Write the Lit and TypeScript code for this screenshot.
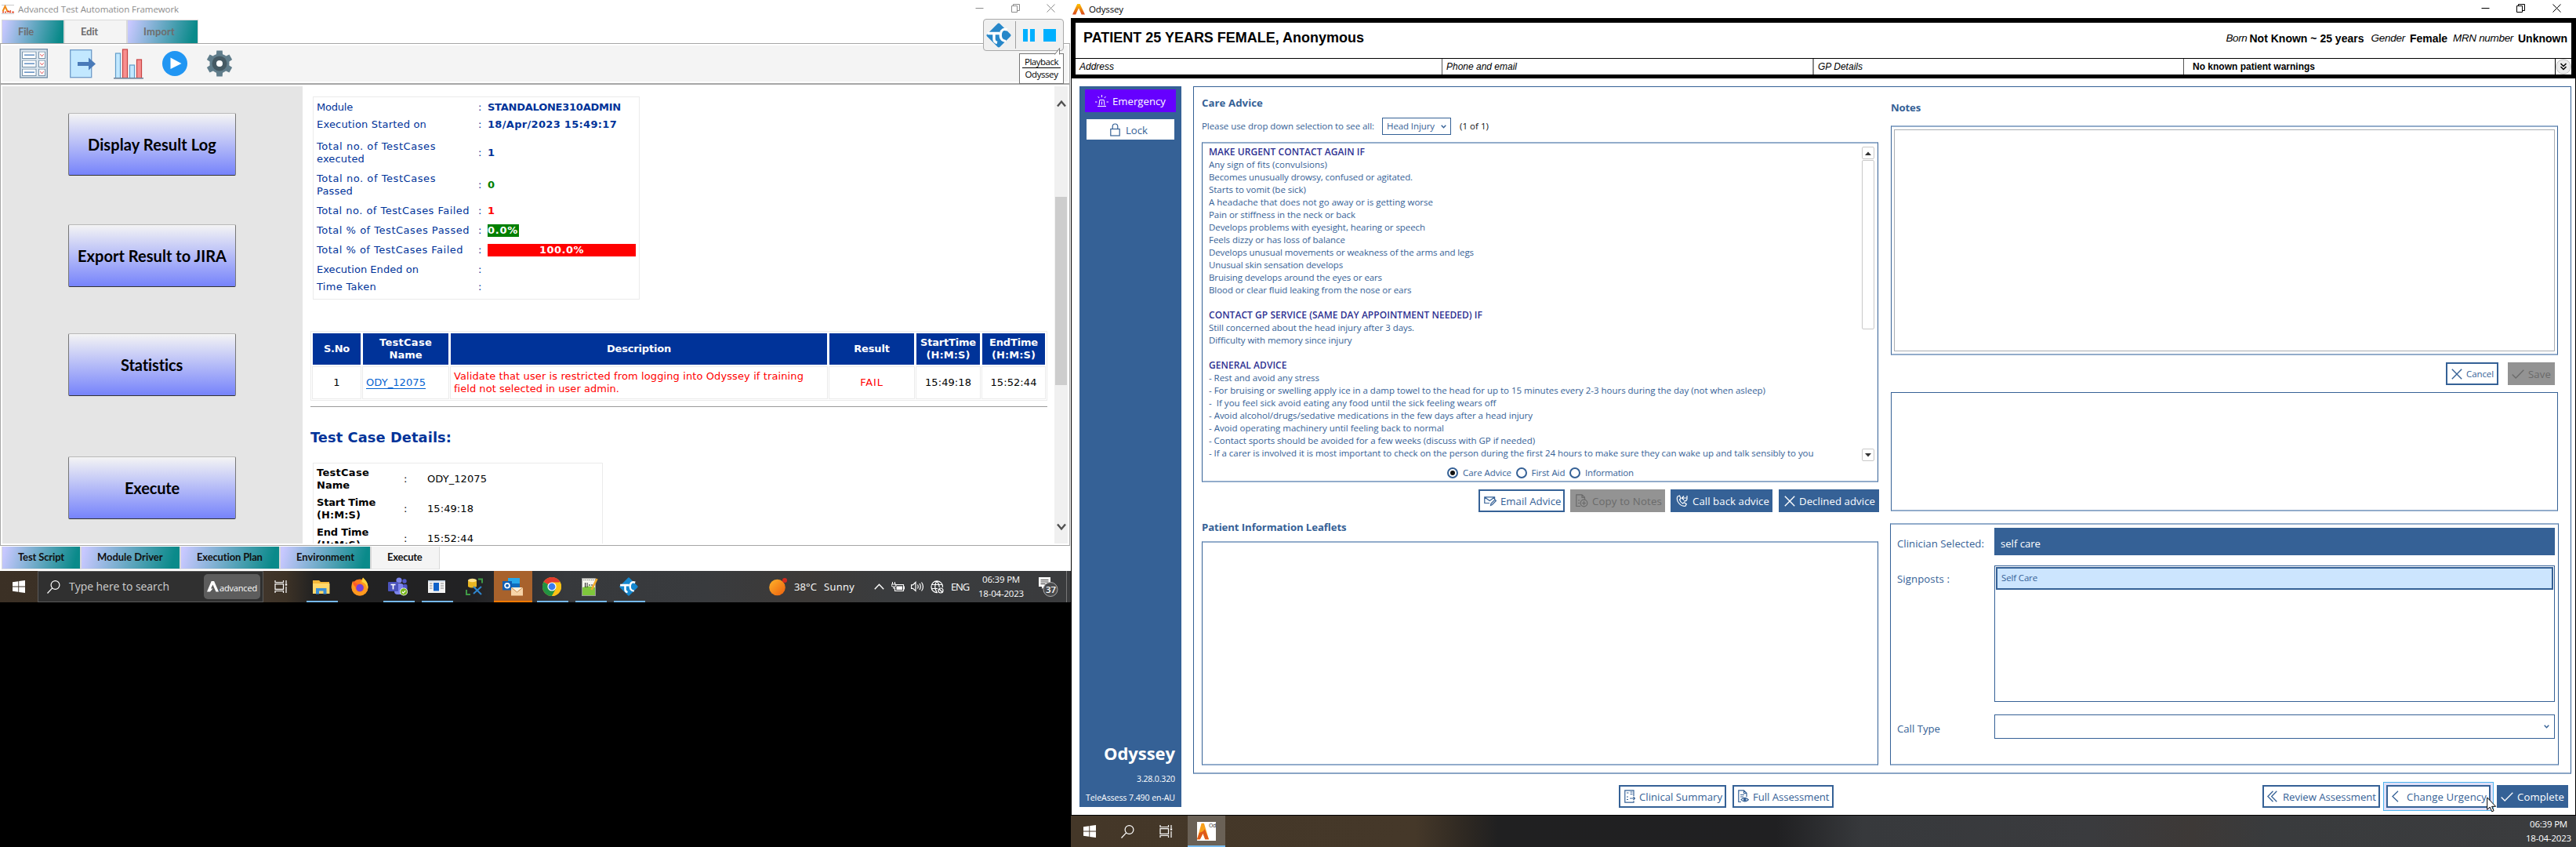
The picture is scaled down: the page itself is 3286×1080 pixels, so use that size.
import { LitElement, html, css, TemplateResult } from "lit";
import { customElement, property } from "lit/decorators.js";

/** A run of text tracked so that it fills exactly `w` pixels. */
@customElement("fit-text")
class FitText extends LitElement {
  @property({ type: Number }) w = 0;
  @property() text = "";
  static styles = css`
    :host { display: inline-block; white-space: pre; flex: none; }
    span { display: inline-block; white-space: pre; }
  `;
  render() {
    return html`<span>${this.text}</span>`;
  }
  updated() {
    const run = this.renderRoot.querySelector("span") as HTMLElement;
    run.style.letterSpacing = "0px";
    const natural = run.getBoundingClientRect().width;
    const step = (this.w - natural) / this.text.length;
    run.style.letterSpacing = `${step}px`;
    this.style.width = `${this.w}px`;
  }
}

const ft = (text: string, w: number, cls = "") =>
  html`<fit-text class=${cls} .text=${text} .w=${w}></fit-text>`;

/* ---------- icons ---------- */
const icoA = html`<svg width="16" height="14" viewBox="0 0 16 14"><defs><linearGradient id="ga" x1="0" y1="0" x2="0" y2="1"><stop offset="0" stop-color="#ffc400"/><stop offset="1" stop-color="#d8451c"/></linearGradient></defs><path d="M6.2 0h3.4L16 13.5h-4.4L8 5.2 4.2 13.5H0z" fill="url(#ga)"/></svg>`;
const icoAtaf = html`<svg width="16" height="12" viewBox="0 0 16 12"><path d="M0 .5h16M0 11.5h16" stroke="#c9c9c9"/><path d="M1.5 8.5L4.5 2l3 6.5" fill="none" stroke="#f08a18" stroke-width="2"/><path d="M1 9.5h2M4 9.5h2M7 9h2M10 9.5h2M13 9.5h3M9 7.5l1 2M11 7.8h1" stroke="#e23c1c" stroke-width="1.6"/></svg>`;
const winMin = html`<svg width="11" height="11" viewBox="0 0 11 11"><path d="M.5 5.5h10" stroke="currentColor"/></svg>`;
const winRestore = html`<svg width="11" height="11" viewBox="0 0 11 11" fill="none" stroke="currentColor"><path d="M.5 2.5h7v8h-7zM2.5 2.5V.5h8v8h-2.500"/></svg>`;
const winClose = html`<svg width="11" height="11" viewBox="0 0 11 11" stroke="currentColor"><path d="M.5.5l10 10M10.5.5l-10 10"/></svg>`;

const icoList = html`<svg width="36" height="38" viewBox="0 0 36 38"><rect x=".7" y=".7" width="34.6" height="36.2" fill="#dce7f0" stroke="#7590a8" stroke-width="1.4"/>${[3.5, 14.5, 25.5].map(
  (y) => html`<svg y=${y} width="36" height="10" viewBox="0 0 36 10"><rect x="3.5" y=".5" width="17.5" height="8.5" fill="#fff" stroke="#7590a8"/><path d="M6 4.7h13" stroke="#3f76b5" stroke-width="1.2"/><rect x="24.5" y=".5" width="8" height="8.5" fill="#fff" stroke="#7590a8"/><path d="M26.300 3.500l2.200 3 2.200-3" stroke="#e0585d" fill="none"/></svg>`
)}</svg>`;
const icoExport = html`<svg width="34" height="37" viewBox="0 0 34 37"><rect x=".7" y=".7" width="27" height="35" fill="#c2e8ff" stroke="#6f9bc9" stroke-width="1.3"/><path d="M10 16h14v-5.500l9 8-9 8V21H10z" fill="#4a7ab8"/></svg>`;
const icoChart = html`<svg width="38" height="39" viewBox="0 0 38 39"><g stroke-width="1.2"><rect x="2.5" y="6" width="6" height="31.5" fill="#c2e8ff" stroke="#5f9cc9"/><rect x="11.5" y="1" width="6" height="36.5" fill="#f78f8f" stroke="#c74343"/><rect x="20.5" y="21" width="6" height="16.5" fill="#c2e8ff" stroke="#5f9cc9"/><rect x="29.5" y="14" width="6" height="23.5" fill="#f78f8f" stroke="#c74343"/></g><path d="M0 37.800h38" stroke="#6b7f95" stroke-width="1.4"/></svg>`;
const icoPlay = html`<svg width="32" height="32" viewBox="0 0 32 32"><circle cx="16" cy="16" r="16" fill="#2196f3"/><path d="M10.500 8.500l14 7.500-14 7z" fill="#fff"/></svg>`;
const icoGear = html`<svg width="34" height="34" viewBox="0 0 34 34"><g fill="#607d8b">${[0, 60, 120].map(
  (a) => html`<svg width="34" height="34" viewBox="0 0 34 34"><path transform="rotate(${a} 17 17)" d="M12.800 8L13.300.5h7.400L21.200 8v18l-.5 7.500h-7.400L12.800 26z"/></svg>`
)}<circle cx="17" cy="17" r="12.5"/></g><circle cx="17" cy="17" r="9.5" fill="#455a64"/><circle cx="17" cy="17" r="4" fill="#fff"/></svg>`;
const tcLogo = (s: number, plate: string) => html`<svg width=${s} height=${s} viewBox="0 0 32 32"><path d="M14.500 1.200q1.500-1.500 3 0L30.800 14.500q1.500 1.500 0 3L17.500 30.800q-1.500 1.500-3 0L1.200 17.500q-1.500-1.500 0-3z" fill=${plate}/><path d="M1.500 13.500H17M10 13.500V21q0 3.500 4 4.500" stroke="#fff" stroke-width="3.4" fill="none"/><path d="M27 9q-7-2.500-8.500 4.500-1.500 9 6.500 10" stroke="#fff" stroke-width="3.2" fill="none"/></svg>`;
const chev = (up: boolean) => html`<svg width="12" height="10" viewBox="0 0 12 10"><path d=${up ? "M1 8.5l5-6 5 6" : "M1 1.5l5 6 5-6"} fill="none" stroke="#505050" stroke-width="2.4"/></svg>`;

const icoSiren = html`<svg width="17" height="16" viewBox="0 0 17 16" fill="none" stroke="#fff"><path d="M5 13.500l.8-7h5.400l.8 7M3 14.500h11M8.500 8.500v4M8.500 0v3M3.500 2l1.700 2M13.500 2l-1.700 2M0 9h2.500M14.500 9H17"/></svg>`;
const icoLock = html`<svg width="13" height="17" viewBox="0 0 13 17" fill="none" stroke="#356196" stroke-width="1.2"><rect x=".8" y="7.5" width="11.4" height="8.5"/><path d="M3.200 7.500V4.500q0-3.500 3.300-3.500t3.300 3.500v3"/></svg>`;
const icoMail = html`<svg width="16" height="14" viewBox="0 0 16 14" fill="none" stroke="currentColor" stroke-width="1.2"><path d="M7 9.500H.8V1.800h12.800v3M.8 2l6.400 4.500L13.500 2M8.500 12.500l.5-2.500 5-5 1.400 1.500-4.900 5z"/></svg>`;
const icoCopy = html`<svg width="16" height="17" viewBox="0 0 16 17" fill="none" stroke="currentColor" stroke-width="1.2"><path d="M6 15.500H.8V.8H8l3.500 3.500V7M8 1v3.500h3.500M3 11.500h2M3 8h2"/><circle cx="10.5" cy="11.5" r="4.3"/><path d="M10.500 9v5M8 11.500h5"/></svg>`;
const icoPhone = html`<svg width="16" height="15" viewBox="0 0 16 15" fill="none" stroke="currentColor" stroke-width="1.2"><path d="M2 2l2.500-1L6 4.500 4.500 6q1 3.500 4 5l1.800-1.300 3 2-1.300 2.500Q7 15 3.500 10.500 0 6 2 2zM8 4h6V1M14 4q.5 4-4 4M10 1.500L7.500 4 10 6.500"/></svg>`;
const icoX = html`<svg width="14" height="14" viewBox="0 0 14 14" stroke="currentColor" stroke-width="1.4"><path d="M.8.8l12.400 12.400M13.200.8L.8 13.200"/></svg>`;
const icoTick = html`<svg width="16" height="12" viewBox="0 0 16 12" fill="none" stroke="currentColor" stroke-width="1.3"><path d="M.7 6.500l4.500 4.500L15.300.7"/></svg>`;
const icoSummary = html`<svg width="14" height="17" viewBox="0 0 14 17" fill="none" stroke="currentColor" stroke-width="1.2"><path d="M12 8V.8H.8v15.400H12v-2M3 4h2.500M7.500 3h3M7.500 5.500h3M3 9h2M3 12.500h2M7 11h6.500M11.500 9l2 2-2 2"/></svg>`;
const icoFull = html`<svg width="14" height="17" viewBox="0 0 14 17" fill="none" stroke="currentColor" stroke-width="1.2"><path d="M4 15.500H.8V.8h6.700L11 4.300V9M7.500 1v3.500H11M3 6.500h5M3 9h4"/><path d="M4 12.700q4.500-4.500 9.300 0-4.800 4.500-9.300 0z"/><circle cx="8.7" cy="12.7" r="1.3" fill="currentColor"/></svg>`;
const icoLeft = html`<svg width="9" height="15" viewBox="0 0 9 15" fill="none" stroke="currentColor" stroke-width="1.3"><path d="M8 .7L1 7.500 8 14.300"/></svg>`;
const icoLeft2 = html`<svg width="13" height="15" viewBox="0 0 13 15" fill="none" stroke="currentColor" stroke-width="1.3"><path d="M7.500.7L.9 7.500l6.600 6.800M12.300.7L5.700 7.500l6.600 6.800"/></svg>`;
const vee = html`<svg width="7" height="5" viewBox="0 0 7 5"><path d="M.7.7l2.800 3 2.800-3" fill="none" stroke="#356196" stroke-width="1.4"/></svg>`;

const icoWin = html`<svg width="16" height="16" viewBox="0 0 16 16" fill="#fff"><path d="M0 2.200L7.300 1.200v6.400H0zM8.200 1.100L16 0v7.600H8.200zM0 8.400h7.300v6.400L0 13.800zM8.200 8.400H16V16l-7.800-1.100z"/></svg>`;
const icoSearch = html`<svg width="17" height="17" viewBox="0 0 17 17" fill="none" stroke="#fff" stroke-width="1.2"><circle cx="10.5" cy="6" r="5.4"/><path d="M6.700 9.800L.5 16.500"/></svg>`;
const icoTaskview = html`<svg width="17" height="16" viewBox="0 0 17 16" fill="none" stroke="#fff" stroke-width="1.2"><path d="M1 0v2.500h10.500V0M1 16v-2.500h10.500V16M1 4.700h10.500v6.600H1zM15 0v4M15 8v8"/><path d="M13.800 5.500h2.400" stroke-width="2.2"/></svg>`;
const icoFolder = html`<svg width="22" height="19" viewBox="0 0 22 19"><path d="M0 1h8l2 2h11v15H0z" fill="#f3b73a"/><path d="M0 5h21.500v13H0z" fill="#ffd86b"/><path d="M4 18.500V11h13.500v7.500h-4V14.500H8v4z" fill="#3b8fd6"/></svg>`;
const icoFox = html`<svg width="24" height="24" viewBox="0 0 24 24"><circle cx="12" cy="13" r="10.5" fill="#ff7a1e"/><path d="M12 23.500A10.500 10.500 0 0022.500 13C22.500 7 18 4 16 .5c-2 4-4 4-3.500 7.500 5 0 7 9 1 10.500-5 1-8-3-7.500-8.500L3 5C-1 14 3 23.500 12 23.500z" fill="#ff9a1f"/><path d="M16 .5c3.500 3 8 8 5.500 15-.5-6-3-8-7-9.500z" fill="#ffd43a"/><circle cx="12" cy="13.5" r="4.8" fill="#7542d8"/><path d="M3 5c1.500 2 4.500 2.500 7 4-2 1-3 2-2 4-3-1-5-4-5-8z" fill="#ff5a2a"/></svg>`;
const icoTeams = html`<svg width="26" height="24" viewBox="0 0 26 24"><circle cx="14" cy="4" r="3.6" fill="#7b83eb"/><circle cx="21" cy="5" r="2.7" fill="#5059c9"/><rect x="8" y="8" width="12" height="14" rx="4" fill="#7b83eb"/><rect x="19" y="9" width="5.5" height="9" rx="2" fill="#5059c9"/><rect x="0" y="6" width="13" height="12" rx="1" fill="#4b53bc"/><path d="M3.500 9.500h6M6.500 9.500V15.500" stroke="#fff" stroke-width="1.6"/><circle cx="20" cy="18.5" r="5" fill="#fff"/><circle cx="20" cy="18.5" r="4.3" fill="#79b51c"/><path d="M17.800 18.500l1.600 1.700 2.800-3" stroke="#fff" fill="none" stroke-width="1.2"/></svg>`;
const icoForm = html`<svg width="22" height="16" viewBox="0 0 22 16"><rect width="22" height="16" fill="#f3f3f3"/><rect x="0" width="22" height="1.5" fill="#bcd"/><rect x="7" y="3" width="7" height="10.5" fill="#0f62c9"/><path d="M2 4h3.500M2 7h3.500M2 10h3.500M16 4h4M16 7h4M16 10h4" stroke="#8a8a8a"/></svg>`;
const icoDb = html`<svg width="23" height="23" viewBox="0 0 23 23"><path d="M3 3v8q5 3 11 0V3z" fill="#e8b422"/><ellipse cx="8.5" cy="3" rx="5.5" ry="2.2" fill="#ffe08a"/><path d="M16 1.500h5v5M1 15v6h5" stroke="#3f9a46" stroke-width="2" fill="none"/><path d="M10 11l10 10M20 11L10 20" stroke="#2f87d0" stroke-width="2"/></svg>`;
const icoOutlook = html`<svg width="27" height="24" viewBox="0 0 27 24"><rect x="7" y="1" width="15" height="15" fill="#28a8ea"/><path d="M7 8h15v6H7z" fill="#0f6cbd"/><rect x="0" y="5" width="12" height="11.5" fill="#0f5fb5"/><circle cx="6" cy="10.7" r="2.9" fill="none" stroke="#fff" stroke-width="1.8"/><rect x="11" y="13" width="15" height="10.5" fill="#f7d4a8"/><path d="M11 13l7.500 6 7.500-6z" fill="#fff1dc"/><path d="M11 13l7.500 6 7.500-6" stroke="#c98b4a" fill="none"/></svg>`;
const icoChrome = html`<svg width="24" height="24" viewBox="0 0 24 24"><circle cx="12" cy="12" r="12" fill="#fbc116"/><path d="M12 12L1.600 6A12 12 0 0122.400 6z" fill="#e33b2e"/><path d="M12 12L1.600 6A12 12 0 0012 24l5-9z" fill="#229342"/><path d="M12 6.500h10.700A12 12 0 0112 24l5-9z" fill="#fbc116"/><circle cx="12" cy="12" r="5.6" fill="#fff"/><circle cx="12" cy="12" r="4.4" fill="#3b7ded"/></svg>`;
const icoNpp = html`<svg width="21" height="24" viewBox="0 0 21 24"><rect x=".5" y="1.5" width="17" height="22" fill="#f6f6ee" stroke="#999"/><path d="M1 13q8-3 16 0v10H1z" fill="#7fc63c"/><path d="M2 3.500h14" stroke="#888" stroke-dasharray="1.5 1"/><path d="M4.500 7v6M7 7v6M9 10h2M12 10h2" stroke="#222"/><path d="M19.500 2l-7 14" stroke="#f0a92a" stroke-width="2.6"/></svg>`;
const icoSun = html`<svg width="24" height="24" viewBox="0 0 24 24"><defs><linearGradient id="gs" x1="0" y1="0" x2="1" y2="1"><stop offset="0" stop-color="#ffb42b"/><stop offset="1" stop-color="#ec5f0d"/></linearGradient></defs><circle cx="10.5" cy="13" r="10.3" fill="url(#gs)"/><circle cx="20" cy="4" r="3" fill="#d42a1e"/></svg>`;
const icoUp = html`<svg width="13" height="8" viewBox="0 0 13 8"><path d="M.8 7.200l5.700-6 5.700 6" fill="none" stroke="#fff" stroke-width="1.4"/></svg>`;
const icoBatt = html`<svg width="17" height="13" viewBox="0 0 17 13"><path d="M5 3.500h10.500v8H4.500V7M15.500 6h1v3h-1" fill="none" stroke="#fff" stroke-width="1.1"/><rect x="6.5" y="5.5" width="7.5" height="4.5" fill="#fff"/><path d="M1.500 0v3M4.500 0v3M0 3h6v2q-3 3-6 0zM3 6v3" stroke="#fff" fill="none"/></svg>`;
const icoVol = html`<svg width="17" height="14" viewBox="0 0 17 14" fill="none" stroke="#fff" stroke-width="1.2"><path d="M.5 4.800h2L6 1.500v11L2.500 9.300h-2zM8.500 4.500q1.500 2.500 0 5M11 3q2.500 4 0 8M13.500 1.500q4 5.500 0 11"/></svg>`;
const icoGlobe = html`<svg width="17" height="17" viewBox="0 0 17 17" fill="none" stroke="#fff" stroke-width="1.2"><path d="M9 15.500A7.300 7.300 0 1115.500 9M1 5.500h14M1 10.500h8M8 .8q-4.500 7 0 14.400M8 .8q3.200 3.700 3.200 8"/><circle cx="13" cy="13" r="3"/><path d="M11 11l4 4"/></svg>`;
const icoNote = html`<svg width="27" height="26" viewBox="0 0 27 26"><path d="M1 1h15v12H8l-3 3v-3H1z" fill="#fff"/><path d="M3.500 4.500h10M3.500 7h10M3.500 9.500h6" stroke="#333"/><circle cx="16" cy="16.5" r="9" fill="#4a4b4d" stroke="#aaa"/></svg>`;
const icoMore = html`<svg width="20" height="20" viewBox="0 0 20 20"><circle cx="10" cy="10" r="9.3" fill="#ececec" stroke="#bdbdbd"/><path d="M6.500 6l3.500 3.500L13.500 6M6.500 10l3.500 3.500 3.500-3.500" fill="none" stroke="#000" stroke-width="1.5"/></svg>`;
const icoBrandA = html`<svg width="15" height="14" viewBox="0 0 15 14"><path d="M5.700 0h3.400L15 13.500h-3.500L7.400 4.500 5 9.500h2.500l-3.500 4H0z" fill="#fff"/></svg>`;
const scrollTri = (up: boolean) => html`<svg width="8" height="5" viewBox="0 0 8 5"><path d=${up ? "M0 5l4-4.5L8 5z" : "M0 0l4 4.5L8 0z"} fill="#333"/></svg>`;

/* ---------- data ---------- */
interface Summary { label: [string, number][]; h: number; value: TemplateResult | string; gap?: boolean }
const summary: Summary[] = [
  { label: [["Module", 46]], h: 22, value: ft("STANDALONE310ADMIN", 170) },
  { label: [["Execution Started on", 140]], h: 22, value: ft("18/Apr/2023 15:49:17", 165), gap: true },
  { label: [["Total no. of TestCases", 152], ["executed", 61]], h: 41, value: "1" },
  { label: [["Total no. of TestCases", 152], ["Passed", 46]], h: 41, value: html`<span class="green">0</span>` },
  { label: [["Total no. of TestCases Failed", 195]], h: 25, value: html`<span class="red">1</span>` },
  { label: [["Total % of TestCases Passed", 195]], h: 25, value: html`<span class="pbar">${ft("0.0%", 39)}</span>` },
  { label: [["Total % of TestCases Failed", 187]], h: 25, value: html`<span class="fbar">${ft("100.0%", 57)}</span>` },
  { label: [["Execution Ended on", 130]], h: 25, value: "" },
  { label: [["Time Taken", 76]], h: 19, value: "" },
];

const advice: [string, number, boolean?][] = [
  ["MAKE URGENT CONTACT AGAIN IF", 199, true],
  ["Any sign of fits (convulsions)", 151],
  ["Becomes unusually drowsy, confused or agitated.", 260],
  ["Starts to vomit (be sick)", 124],
  ["A headache that does not go away or is getting worse", 286],
  ["Pain or stiffness in the neck or back", 187],
  ["Develops problems with eyesight, hearing or speech", 276],
  ["Feels dizzy or has loss of balance", 174],
  ["Develops unusual movements or weakness of the arms and legs", 338],
  ["Unusual skin sensation develops", 171],
  ["Bruising develops around the eyes or ears", 221],
  ["Blood or clear fluid leaking from the nose or ears", 258.5],
  ["", 0],
  ["CONTACT GP SERVICE (SAME DAY APPOINTMENT NEEDED) IF", 349, true],
  ["Still concerned about the head injury after 3 days.", 262],
  ["Difficulty with memory since injury", 182.5],
  ["", 0],
  ["GENERAL ADVICE", 99.5, true],
  ["- Rest and avoid any stress", 141],
  ["- For bruising or swelling apply ice in a damp towel to the head for up to 15 minutes every 2-3 hours during the day (not when asleep)", 710],
  ["-  If you feel sick avoid eating any food until the sick feeling wears off", 366.5],
  ["- Avoid alcohol/drugs/sedative medications in the few days after a head injury", 413],
  ["- Avoid operating machinery until feeling back to normal", 300],
  ["- Contact sports should be avoided for a few weeks (discuss with GP if needed)", 416],
  ["- If a carer is involved it is most important to check on the person during the first 24 hours to make sure they can wake up and talk sensibly to you", 771.5],
  ["- Look out for any change in their behaviour for the 24-48 hours after the injury", 404],
];

@customElement("ataf-window")
class AtafWindow extends LitElement {
  static styles = css`
    :host { display: flex; flex-direction: column; width: 1366px; height: 768px; background: #fff; position: relative; font: 11.5px/16px "Open Sans", sans-serif; }
    * { box-sizing: border-box; }
    svg { display: block; flex: none; }
    .title { height: 25px; display: flex; align-items: center; padding: 0 20px 1px 2px; color: #8c8c8c; }
    .title fit-text { margin-left: 5px; }
    .ctl { margin-left: auto; display: flex; gap: 34.5px; padding-bottom: 3px; }
    .tabs { display: flex; height: 30px; padding-left: 2px; font: 700 13px/16px Lato, sans-serif; }
    .tab { border: 1px solid #d9d9d9; border-bottom: 0; padding: 6px 0 0 20px; background: linear-gradient(105deg, #c8c8ff 3%, #0a8a8a 92%); color: #6d6d6d; flex: none; }
    .tab.on { background: #f4f4f4; }
    .w80 { width: 80px; } .w91 { width: 91px; }
    .frame { border: 1px solid #a6a6a6; border-bottom: 0; margin-right: 1px; height: 51px; padding: 2px 2px 0; }
    .tools { background: #f4f4f4; height: 46px; display: flex; align-items: center; padding-left: 22px; }
    .tools svg + svg { margin-left: 28px; }
    .tools svg:nth-child(3) { margin-left: 22px; } .tools svg:nth-child(4) { margin-left: 24px; } .tools svg:nth-child(5) { margin-left: 24px; }
    .body { display: flex; border: solid #a6a6a6; border-width: 2px 1px 1px; margin-right: 1px; height: 590px; padding: 2px; }
    .side { width: 383px; background: #e5e5e5; padding: 34px 0 0 84px; display: flex; flex-direction: column; }
    .big { width: 214px; height: 80px; border: 1px solid #b9b9b9; border-bottom: 1px solid #333; border-left-color: #777; border-right-color: #777; border-radius: 2px; background: linear-gradient(#f4f4f4, #7683fb); display: flex; align-items: center; justify-content: center; font: 700 20px/24px Lato, sans-serif; color: #000; flex: none; }
    .b2 { margin-top: 62px; } .b3 { margin-top: 59px; } .b4 { margin-top: 77px; }
    .doc { flex: 1; overflow: hidden; padding: 13px 0 0 10px; font: 13px/16px "DejaVu Sans", Verdana, sans-serif; color: #000; }
    .sum { border: 1px solid #ebebeb; width: 417px; height: 259px; margin-left: 3px; padding-top: 2px; color: #003399; }
    .row { display: flex; align-items: center; padding-left: 4px; }
    .row.gap { margin-bottom: 4px; }
    .lab { width: 206px; display: flex; flex-direction: column; align-items: flex-start; }
    .col { width: 12px; }
    .val { font-weight: 700; display: flex; }
    .green { color: #008000; } .red { color: #f00; }
    .pbar { background: #008000; color: #fff; width: 40px; height: 16px; display: block; }
    .fbar { background: #f00; color: #fff; width: 189px; height: 16px; display: flex; justify-content: center; }
    .res { display: grid; grid-template-columns: 63px 111px 482px 110px 83px 82px; grid-template-rows: 42px 42px; gap: 1px; width: 940px; border: 1px solid #ebebeb; margin-top: 40px; padding: 1px; }
    .th { background: #003399; background-clip: padding-box; border: 1px solid #fff; color: #fff; font-weight: 700; display: flex; flex-direction: column; align-items: center; justify-content: center; }
    .td { border: 1px solid #ebebeb; display: flex; flex-direction: column; align-items: center; justify-content: center; }
    .td.l { align-items: flex-start; padding-left: 4px; }
    .link { color: #0563d1; border-bottom: 1px solid #0563d1; line-height: 14px; }
    .hr { height: 1px; background: #9a9a9a; width: 940px; margin-top: 7px; }
    h2 { margin: 28px 0 22px; font: 700 17.8px/21px "DejaVu Sans", sans-serif; color: #003399; height: 21px; }
    .det { border: 1px solid #ebebeb; width: 370px; height: 130px; margin-left: 3px; padding: 4px 0 0 4px; }
    .drow { display: flex; align-items: center; height: 32px; margin-bottom: 6px; }
    .dl { width: 111px; font-weight: 700; display: flex; flex-direction: column; align-items: flex-start; }
    .dc { width: 30px; }
    .sb { width: 17px; background: #f0f0f0; display: flex; flex-direction: column; align-items: center; padding: 17px 0; }
    .thumb { width: 15px; height: 240px; background: #cdcdcd; margin: 114px 0 176px; flex: none; }
    .btabs { display: flex; height: 32px; padding: 1px 0 2px 2px; font: 700 13px/16px Lato, sans-serif; }
    .btabs .tab { color: #111; border-top: 0; border-bottom: 1px solid #e3e3e3; padding-top: 5px; }
    .x1 { width: 101px; } .x2 { width: 127px; } .x3 { width: 116px; } .x4 { width: 88px; }
    .bar { height: 40px; display: flex; color: #fff; background: linear-gradient(90deg, #3b3025 0, #40352a 340px, #3d3226 365px, #222 400px, #222224 600px, #37393c 720px, #393b3e 900px, #3d3a38 1030px, #3a3c3e 1130px, #3a3b3d); }
    .start { width: 48px; display: flex; align-items: center; justify-content: center; }
    .find { width: 288px; border: 1px solid #5a5a5a; background: #303030; display: flex; align-items: center; padding: 0 3px 0 11px; font-size: 14px; line-height: 20px; color: #cfcfcf; }
    .find fit-text { margin-left: 11px; }
    .chip { margin-left: auto; width: 72px; height: 32px; border-radius: 5px; background: #5d5d5d; display: flex; align-items: center; padding-left: 4px; font-size: 11px; color: #fff; }
    .chip fit-text { margin: 3px 0 0 1px; }
    .tv { width: 47px; display: flex; align-items: center; padding-left: 14px; margin-right: 2px; }
    .app { width: 49px; display: flex; align-items: center; justify-content: center; position: relative; }
    .app.run::after { content: ""; position: absolute; left: 6px; right: 3px; bottom: 0; height: 2px; background: #76b9ed; }
    .app.hot { background: #a8622c; }
    .app.hot.run::after { left: 0; right: 0; background: #ff7a00; }
    .tray { margin-left: auto; display: flex; align-items: center; font-size: 13px; line-height: 18px; }
    .tray .s { font-size: 11.5px; display: flex; flex-direction: column; align-items: center; }
    .note { position: relative; }
    .note b { position: absolute; left: 8px; top: 8px; font: 600 11.5px/17px "Open Sans", sans-serif; width: 17px; text-align: center; }
    .pk { width: 1px; height: 40px; background: #777; margin: 0 5px 0 9px; }
    .m25 { margin-left: 25px; } .m9 { margin-left: 9px; } .m8 { margin-left: 8px; } .m12 { margin-left: 12px; } .m18 { margin-left: 18px; }
    .tc { position: absolute; left: 1254px; top: 24px; width: 103px; height: 41px; border: 1px solid #a9a9a9; border-radius: 4px; background: #f0f0f0; display: flex; align-items: center; padding-left: 3px; }
    .tc .div { width: 1px; height: 35px; background: #a0a0a0; margin: 0 9px 0 5px; }
    .tc .p { width: 6px; height: 16px; background: #00b0ff; margin-right: 3px; }
    .tc .q { width: 16px; height: 16px; background: #00b0ff; margin-left: 8px; }
    .tip { position: absolute; left: 1300px; top: 68px; width: 57px; height: 39px; border: 1px solid #777; background: #fff; padding: 2px 3px; color: #000; display: flex; flex-direction: column; align-items: center; line-height: 15px; }
    .tip i { height: 1px; width: 49px; background: #000; flex: none; }
    .ptr { position: absolute; left: 1345px; top: 61px; }
  `;
  render() {
    return html`
      <div class="title">${icoAtaf}${ft("Advanced Test Automation Framework", 205)}<div class="ctl">${winMin}${winRestore}${winClose}</div></div>
      <div class="tabs">
        <div class="tab w80">${ft("File", 20)}</div><div class="tab on w80">${ft("Edit", 22)}</div><div class="tab w91">${ft("Import", 40)}</div>
      </div>
      <div class="frame"><div class="tools">${icoList}${icoExport}${icoChart}${icoPlay}${icoGear}</div></div>
      <div class="body">
        <div class="side">
          <div class="big">${ft("Display Result Log", 164)}</div>
          <div class="big b2">${ft("Export Result to JIRA", 190)}</div>
          <div class="big b3">${ft("Statistics", 80)}</div>
          <div class="big b4">${ft("Execute", 70)}</div>
        </div>
        <div class="doc">
          <div class="sum">
            ${summary.map((r) => html`<div class="row ${r.gap ? "gap" : ""}" style="height:${r.h}px">
              <div class="lab">${r.label.map(([t, w]) => ft(t, w))}</div><div class="col">:</div><div class="val">${r.value}</div>
            </div>`)}
          </div>
          <div class="res">
            <div class="th">${ft("S.No", 33)}</div><div class="th">${ft("TestCase", 67)}${ft("Name", 42)}</div><div class="th">${ft("Description", 82)}</div>
            <div class="th">${ft("Result", 45.5)}</div><div class="th">${ft("StartTime", 71)}${ft("(H:M:S)", 56)}</div><div class="th">${ft("EndTime", 62)}${ft("(H:M:S)", 56)}</div>
            <div class="td">1</div><div class="td l">${ft("ODY_12075", 76, "link")}</div>
            <div class="td l red">${ft("Validate that user is restricted from logging into Odyssey if training", 446)}${ft("field not selected in user admin.", 211)}</div>
            <div class="td red">${ft("FAIL", 29.5)}</div><div class="td">${ft("15:49:18", 59)}</div><div class="td">${ft("15:52:44", 59)}</div>
          </div>
          <div class="hr"></div>
          <h2>${ft("Test Case Details:", 180)}</h2>
          <div class="det">
            <div class="drow"><div class="dl">${ft("TestCase", 67)}${ft("Name", 42)}</div><div class="dc">:</div>${ft("ODY_12075", 76)}</div>
            <div class="drow"><div class="dl">${ft("Start Time", 75)}${ft("(H:M:S)", 56)}</div><div class="dc">:</div>${ft("15:49:18", 59)}</div>
            <div class="drow"><div class="dl">${ft("End Time", 66)}${ft("(H:M:S)", 56)}</div><div class="dc">:</div>${ft("15:52:44", 59)}</div>
          </div>
        </div>
        <div class="sb">${chev(true)}<div class="thumb"></div>${chev(false)}</div>
      </div>
      <div class="btabs">
        <div class="tab x1">${ft("Test Script", 59)}</div><div class="tab x2">${ft("Module Driver", 83.5)}</div><div class="tab x2">${ft("Execution Plan", 84)}</div>
        <div class="tab x3">${ft("Environment", 74)}</div><div class="tab on x4">${ft("Execute", 44.5)}</div>
      </div>
      <div class="bar">
        <div class="start">${icoWin}</div>
        <div class="find">${icoSearch}${ft("Type here to search", 128)}<div class="chip">${icoBrandA}${ft("advanced", 48)}</div></div>
        <div class="tv">${icoTaskview}</div>
        <div class="app run">${icoFolder}</div><div class="app">${icoFox}</div><div class="app run">${icoTeams}</div><div class="app run">${icoForm}</div>
        <div class="app">${icoDb}</div><div class="app hot run">${icoOutlook}</div><div class="app run">${icoChrome}</div><div class="app run">${icoNpp}</div><div class="app run">${tcLogo(24, "#1487cf")}</div>
        <div class="tray">
          ${icoSun}${ft("38°C", 29, "m8")}${ft("Sunny", 39, "m9")}
          <span class="m25">${icoUp}</span><span class="m9">${icoBatt}</span><span class="m8">${icoVol}</span><span class="m8">${icoGlobe}</span>
          ${ft("ENG", 23, "m9")}
          <div class="s m12">${ft("06:39 PM", 48)}${ft("18-04-2023", 58)}</div>
          <div class="note m18">${icoNote}<b>37</b></div><i class="pk"></i>
        </div>
      </div>
      <div class="tc">${tcLogo(32, "#2787c9")}<i class="div"></i><i class="p"></i><i class="p"></i><i class="q"></i></div>
      <div class="tip">${ft("Playback", 43)}<i></i>${ft("Odyssey", 42)}</div>
      <svg class="ptr" width="8" height="9" viewBox="0 0 8 9"><path d="M.5 8.5L6.500.5v8" fill="#fff" stroke="#777"/></svg>
    `;
  }
}

@customElement("odyssey-window")
class OdysseyWindow extends LitElement {
  static styles = css`
    :host { display: flex; flex-direction: column; width: 1920px; height: 1080px; background: #fff; color: #356196; font: 11.5px/16px "Open Sans", sans-serif; }
    * { box-sizing: border-box; }
    svg { display: block; flex: none; }
    .title { height: 23px; display: flex; align-items: center; padding: 0 19.5px 0 2px; color: #000; flex: none; }
    .title fit-text { margin-left: 5px; }
    .ctl { margin-left: auto; display: flex; gap: 34.5px; padding-bottom: 2px; }
    .pt { height: 77px; flex: none; border: solid #000; border-width: 6px 6px 5px; font-family: "Liberation Sans", Arial, sans-serif; color: #000; }
    .p1 { height: 46px; border-bottom: 1px solid #000; display: flex; align-items: center; padding: 0 5px 8px 10px; }
    .name { font-size: 18px; line-height: 22px; font-weight: 700; }
    .meta { margin-left: auto; display: flex; font-size: 14px; line-height: 18px; padding-top: 2px; }
    .it { font-style: italic; } .b { font-weight: 700; }
    .meta .it { font-size: 13.5px; }
    .g3 { margin-left: 3px; } .g9 { margin-left: 9px; } .g6 { margin-left: 6px; } .g7 { margin-left: 7px; }
    .p2 { display: flex; height: 20px; font-size: 12px; line-height: 20px; }
    .p2 div { border-right: 1px solid #555; padding-left: 5px; flex: none; }
    .c1 { width: 468px; } .c2 { width: 474px; } .p2 .c2 { border-right: 2px solid #888; } .c3 { width: 472px; } .p2 .c4 { width: 474px; border-color: #000; padding-left: 11px; }
    .body { height: 940px; flex: none; display: flex; border: solid #000; border-width: 0 1px 1px; padding: 10px 5px 9px 10px; }
    .nav { width: 130px; height: 919px; background: #356196; padding: 4px 7px; display: flex; flex-direction: column; color: #fff; }
    .em { height: 29px; background: #6600ff; display: flex; align-items: center; padding-left: 13px; font-size: 13.2px; }
    .em fit-text { margin-left: 5px; }
    .lk { height: 26px; margin: 9px 2px 0; background: #fff; color: #356196; display: flex; align-items: center; padding-left: 30px; font-size: 13.2px; }
    .lk fit-text { margin: 2px 0 0 7px; }
    .brand { margin-top: auto; display: flex; flex-direction: column; align-items: flex-end; padding-right: 1px; font-size: 10.6px; }
    .logo { font-size: 22px; line-height: 30px; font-weight: 700; margin-bottom: 10px; }
    .ver { margin-bottom: 8px; }
    .main { margin-left: 15px; width: 1758px; display: flex; flex-direction: column; }
    .panel { height: 877px; border: 1px solid #356196; border-bottom: 2px solid #8aa5c5; display: flex; padding-left: 10px; gap: 15px; flex: none; }
    .left { width: 863px; display: flex; flex-direction: column; }
    .right { width: 853px; display: flex; flex-direction: column; }
    h3 { margin: 9px 0 0; height: 20px; font: 700 13.2px/20px "Open Sans", sans-serif; flex: none; }
    h3.first { margin-top: 10px; }
    h3.nt { margin: 16px 0 0 1px; }
    .sel { display: flex; align-items: center; height: 22px; margin-top: 9px; flex: none; }
    .combo { width: 88px; height: 22px; border: 1px solid #356196; margin: 0 11px 0 10px; display: flex; align-items: center; padding: 0 5px; justify-content: space-between; }
    .blk { color: #111; }
    .box { border: solid #356196; border-width: 2px 1px; border-top-color: #92accb; border-bottom-color: #92accb; flex: none; }
    .care { height: 434px; margin-top: 9px; display: flex; flex-direction: column; padding: 4px 4px 0 8px; }
    .scroll { display: flex; justify-content: space-between; height: 402px; overflow: hidden; flex: none; }
    .lines { margin-top: -1px; }
    .ln { height: 16px; }
    .ln.h { font-weight: 600; font-size: 12px; color: #2e3192; }
    .sb { width: 16px; display: flex; flex-direction: column; }
    .ar { height: 16px; border: 1px solid #c9c9c9; border-radius: 2px; display: flex; align-items: center; justify-content: center; }
    .th { height: 216px; border: 1px solid #c9c9c9; border-radius: 2px; margin: 1px 0 152px; }
    .rad { display: flex; align-items: center; height: 22px; padding-left: 304px; margin-top: 3px; }
    .o { width: 14px; height: 14px; border: 2px solid #356196; border-radius: 50%; margin-right: 6px; flex: none; display: flex; align-items: center; justify-content: center; }
    .o.on::after { content: ""; width: 6px; height: 6px; border-radius: 50%; background: #111; }
    .o.n { margin-left: 5.500px; }
    .btns { display: flex; justify-content: flex-end; margin: 9px -1px 0 0; height: 29px; flex: none; }
    .btns.rb { margin: 9px 5px 0 0; }
    .btn { height: 29px; border: 2px solid #356196; display: flex; align-items: center; font-size: 13.2px; line-height: 18px; background: #fff; color: #356196; padding-left: 5px; flex: none; }
    .btn.f { background: #356196; color: #fff; }
    .btn.d { background: #939393; border-color: #939393; color: #6a6a6a; }
    .btn fit-text { margin-left: 5px; }
    .small { font-size: 11.5px; }
    .leaf { height: 286px; margin-top: 8px; }
    .notes { height: 293px; margin: 13px 1px 0; padding: 3px; }
    .notes div { border: 1px solid #a9adb3; height: 100%; }
    .mid { height: 152px; margin: 9px 1px 0; border-top: 1px solid #356196; }
    .form { height: 309px; margin-top: 15px; padding: 4px 0 0 8px; }
    .fr { display: flex; font-size: 13.2px; line-height: 18px; align-items: center; }
    .fr.sg { align-items: flex-start; margin-top: 13px; }
    .fr.ct { margin-top: 16px; }
    .fl { width: 124px; padding-top: 4px; }
    .fr.sg .fl { padding-top: 8px; }
    .f1 { width: 715px; height: 35px; background: #356196; color: #fff; display: flex; align-items: center; padding: 4px 0 0 8px; }
    .f2 { width: 715px; height: 174px; border: 1px solid #356196; padding: 1px; }
    .item { height: 29px; border: 2px solid #356196; background: #cce5fe; padding-left: 5px; font-size: 11.5px; line-height: 24px; }
    .f3 { width: 715px; height: 31px; border: 1px solid #356196; display: flex; align-items: center; justify-content: flex-end; padding-right: 6px; }
    .foot { display: flex; margin-top: 14px; }
    .halo { border: 1px solid #4db4ee; background: #dfe0f8; width: 141px; height: 37px; margin: -4px 4px 0; padding: 3px; position: relative; }
    .cur { position: absolute; left: 131px; top: 18px; }
    .a0 { width: 110px; } .a1 { width: 121px; margin-left: 7px; } .a2 { width: 130px; margin-left: 7px; } .a3 { width: 128px; margin-left: 8px; }
    .k1 { width: 67px; } .k2 { width: 60px; margin-left: 12px; padding-left: 3px; }
    .e1 { width: 137px; margin-left: 543px; } .e2 { width: 129px; margin-left: 8px; } .e3 { width: 150px; margin-left: 547px; padding-left: 4px; } .e4 { width: 133px; } .e5 { width: 91px; padding-left: 3px; }
    .e3 fit-text { margin-left: 7px; } .e4 fit-text { margin-left: 10px; }
    .bar { height: 40px; display: flex; align-items: center; padding-left: 16px; color: #fff; flex: none; background: linear-gradient(90deg, #443728 0, #453829 440px, #2f2922 500px, #202021 545px, #202022 900px, #37393c 1010px, #3a3b3e 1300px, #3d3937 1430px, #393b3d 1530px, #3b3c3e); }
    .appb { width: 48px; height: 40px; background: #6a6156; border-bottom: 2px solid #76b9ed; padding: 8px 12px 6px; margin-left: 19px; }
    .tile { background: #fff; width: 24px; height: 24px; color: #333; font-size: 7px; line-height: 10px; display: flex; letter-spacing: -0.4px; }
    .sp { margin-left: 32px; }
    .clock { margin-left: auto; display: flex; flex-direction: column; align-items: center; line-height: 18px; margin-right: 6px; }
  `;
  render() {
    return html`
      <div class="title">${icoA}${ft("Odyssey", 44)}<div class="ctl">${winMin}${winRestore}${winClose}</div></div>
      <div class="pt">
        <div class="p1">
          ${ft("PATIENT 25 YEARS FEMALE, Anonymous", 358, "name")}
          <div class="meta">${ft("Born", 27, "it")}${ft("Not Known ~ 25 years", 146, "b g3")}${ft("Gender", 43.5, "it g9")}${ft("Female", 48, "b g6")}${ft("MRN number", 77, "it g7")}${ft("Unknown", 63, "b g6")}</div>
        </div>
        <div class="p2">
          <div class="c1">${ft("Address", 44, "it")}</div><div class="c2">${ft("Phone and email", 90, "it")}</div><div class="c3">${ft("GP Details", 57, "it")}</div>
          <div class="c4">${ft("No known patient warnings", 156, "b")}</div>${icoMore}
        </div>
      </div>
      <div class="body">
        <div class="nav">
          <div class="em">${icoSiren}${ft("Emergency", 68)}</div>
          <div class="lk">${icoLock}${ft("Lock", 28)}</div>
          <div class="brand">${ft("Odyssey", 91, "logo")}${ft("3.28.0.320", 49, "ver")}${ft("TeleAssess 7.490 en-AU", 114)}</div>
        </div>
        <div class="main">
          <div class="panel">
            <div class="left">
              <h3 class="first">${ft("Care Advice", 78)}</h3>
              <div class="sel">${ft("Please use drop down selection to see all:", 220)}<div class="combo">${ft("Head Injury", 61)}${vee}</div>${ft("(1 of 1)", 37, "blk")}</div>
              <div class="box care">
                <div class="scroll">
                  <div class="lines">${advice.map(([t, w, h]) => html`<div class="ln ${h ? "h" : ""}">${t ? ft(t, w) : ""}</div>`)}</div>
                  <div class="sb"><div class="ar">${scrollTri(true)}</div><div class="th"></div><div class="ar">${scrollTri(false)}</div></div>
                </div>
                <div class="rad"><i class="o on"></i>${ft("Care Advice", 62)}<i class="o n"></i>${ft("First Aid", 43)}<i class="o n"></i>${ft("Information", 62)}</div>
              </div>
              <div class="btns">
                <div class="btn a0">${icoMail}${ft("Email Advice", 77.5)}</div>
                <div class="btn d a1">${icoCopy}${ft("Copy to Notes", 89)}</div>
                <div class="btn f a2">${icoPhone}${ft("Call back advice", 98)}</div>
                <div class="btn f a3">${icoX}${ft("Declined advice", 97)}</div>
              </div>
              <h3>${ft("Patient Information Leaflets", 184.5)}</h3>
              <div class="box leaf"></div>
            </div>
            <div class="right">
              <h3 class="nt">${ft("Notes", 38)}</h3>
              <div class="box notes"><div></div></div>
              <div class="btns rb">
                <div class="btn k1">${icoX}<span class="small">${ft("Cancel", 35)}</span></div>
                <div class="btn d k2">${icoTick}${ft("Save", 29)}</div>
              </div>
              <div class="box mid"></div>
              <div class="box form">
                <div class="fr"><div class="fl">${ft("Clinician Selected:", 111)}</div><div class="f1">${ft("self care", 51)}</div></div>
                <div class="fr sg"><div class="fl">${ft("Signposts :", 67)}</div><div class="f2"><div class="item">${ft("Self Care", 46)}</div></div></div>
                <div class="fr ct"><div class="fl">${ft("Call Type", 55)}</div><div class="f3">${vee}</div></div>
              </div>
            </div>
          </div>
          <div class="foot">
            <div class="btn e1">${icoSummary}${ft("Clinical Summary", 106)}</div>
            <div class="btn e2">${icoFull}${ft("Full Assessment", 97.5)}</div>
            <div class="btn e3">${icoLeft2}${ft("Review Assessment", 119)}</div>
            <div class="halo"><div class="btn e4">${icoLeft}${ft("Change Urgency", 102)}</div>
              <svg class="cur" width="13" height="20" viewBox="0 0 13 20"><path d="M.7.9v15.500l3.500-3.300 2.500 5.700 2.400-1-2.500-5.500h5z" fill="#fff" stroke="#000"/></svg>
            </div>
            <div class="btn f e5">${icoTick}${ft("Complete", 60)}</div>
          </div>
        </div>
      </div>
      <div class="bar">
        ${icoWin}<span class="sp">${icoSearch}</span><span class="sp">${icoTaskview}</span>
        <div class="appb"><div class="tile"><svg width="15" height="24" viewBox="0 0 16 24"><path d="M6 1h3.500L16 23h-5L8 15l-4 8H0z" fill="#f9a11b"/><path d="M10.500 9L16 23h-5L8 15l-4 8H0l3-9 5-2z" fill="#df5a1a"/></svg>Od</div></div>
        <div class="clock">${ft("06:39 PM", 48)}${ft("18-04-2023", 58)}</div>
      </div>
    `;
  }
}

@customElement("app-root")
class AppRoot extends LitElement {
  static styles = css`
    :host { display: flex; align-items: flex-start; width: 3286px; height: 1080px; background: #000; overflow: hidden; }
    ataf-window, odyssey-window { flex: none; }
  `;
  render() {
    return html`<ataf-window></ataf-window><odyssey-window></odyssey-window>`;
  }
}
